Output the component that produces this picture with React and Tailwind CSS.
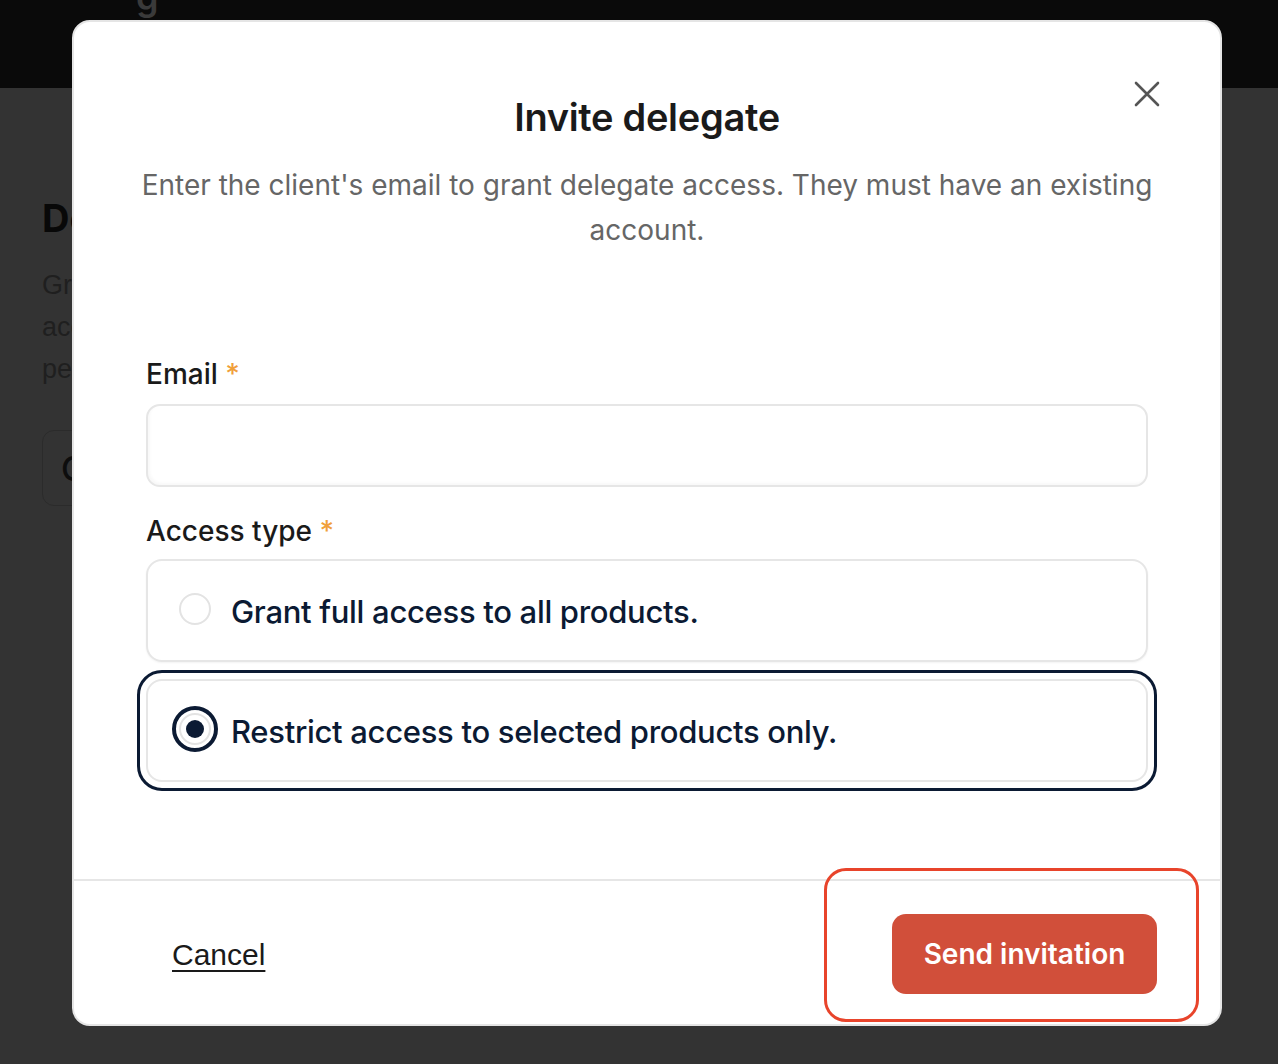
import React from "react";

export default function App() {
  return (
    <div className="relative w-[1278px] h-[1064px] overflow-hidden bg-[#333333]" style={{ fontFamily: "Inter, 'Noto Sans', sans-serif" }}>
      {/* background page (dimmed) */}
      <div className="h-[88px] bg-[#0a0a0a] relative overflow-hidden">
        <span className="absolute left-[136px] top-[-30px] text-[36px] text-[#3a3a3a] font-semibold">g</span>
      </div>
      <div className="pl-[42px] pt-[108px]">
        <div className="text-[38px] font-bold text-[#080808] leading-[44px]">Delegates</div>
        <div className="mt-[24px] text-[27px] leading-[42px] text-[#1f1f1f]" style={{ fontFamily: "'Liberation Sans', Arial, sans-serif" }}>
          <div>Grant</div>
          <div>access</div>
          <div>people</div>
        </div>
        <div className="mt-[40px] w-[300px] h-[76px] rounded-[12px] border border-[#2b2b2b] flex items-center pl-[18px] text-[34px] text-[#0d0d0d] font-medium">
          Cancel
        </div>
      </div>

      {/* modal */}
      <div className="absolute left-[72px] top-[20px] w-[1150px] h-[1006px] bg-white rounded-[18px] border-2 border-[#e5e5e5] flex flex-col">
        <button className="absolute right-[59px] top-[58px] w-[28px] h-[28px] flex items-center justify-center text-[#555]">
          <svg width="28" height="28" viewBox="0 0 28 28" fill="none" stroke="currentColor" strokeWidth="2.6" strokeLinecap="round">
            <path d="M3 3 L25 25 M25 3 L3 25" />
          </svg>
        </button>
        <div className="px-[60px] pt-[73px]">
          <h2 className="text-center text-[38px] leading-[44px] font-semibold text-[#1a1a1a] tracking-[-0.3px]">Invite delegate</h2>
          <p className="mt-[24px] text-center text-[28px] leading-[45px] text-[#666666]">
            Enter the client's email to grant delegate access. They must have an existing account.
          </p>
        </div>
        <div className="px-[72px] pt-[101px] flex-1">
          <label className="block text-[28px] leading-[40px] font-medium text-[#1a1a1a]">
            Email <span className="text-[#f0a03a]">*</span>
          </label>
          <div className="mt-[10px] h-[83px] rounded-[14px] border-2 border-[#e6e6e6] shadow-[inset_2px_-2px_3px_rgba(0,0,0,0.03)]"></div>
          <label className="block mt-[24px] text-[28px] leading-[40px] font-medium text-[#1a1a1a]">
            Access type <span className="text-[#f0a03a]">*</span>
          </label>
          <div className="mt-[8px] flex flex-col gap-[17px]">
            <div className="h-[103px] rounded-[16px] border-2 border-[#e6e6e6] shadow-[0_1px_2px_rgba(0,0,0,0.05)] flex items-center pl-[31px]">
              <span className="mb-[3px] w-[32px] h-[32px] rounded-full border-2 border-[#e3e3e3] shrink-0"></span>
              <span className="mt-[4px] ml-[20px] text-[31px] font-medium text-[#0b1a33] tracking-[-0.3px]">Grant full access to all products.</span>
            </div>
            <div className="h-[103px] rounded-[16px] border-2 border-[#e6e6e6] outline-[3px] outline-solid outline-[#0b1a33] outline-offset-[6px] flex items-center pl-[31px]">
              <span className="mb-[3px] relative w-[32px] h-[32px] rounded-full border-2 border-[#e3e3e3] shrink-0 flex items-center justify-center outline-[4px] outline-solid outline-[#0b1a33] outline-offset-[3px]">
                <span className="w-[18px] h-[18px] rounded-full bg-[#0b1a33]"></span>
              </span>
              <span className="mt-[4px] ml-[20px] text-[31px] font-medium text-[#0b1a33] tracking-[-0.3px]">Restrict access to selected products only.</span>
            </div>
          </div>
        </div>
        <div className="relative h-[145px] border-t-2 border-[#e6e6e6] flex items-center justify-between pl-[98px] pr-[63px]">
          <button className="mt-[4px] text-[30px] text-[#1a1a1a] underline decoration-2 underline-offset-[5px]" style={{ fontFamily: "'Liberation Sans', Arial, sans-serif" }}>Cancel</button>
          <button className="mt-[2px] w-[265px] h-[80px] rounded-[14px] bg-[#d14f3a] text-white text-[28px] font-semibold">Send invitation</button>
          <div className="absolute right-[21px] top-[-13px] w-[375px] h-[154px] rounded-[22px] border-[3.5px] border-[#e8442b] pointer-events-none"></div>
        </div>
      </div>
    </div>
  );
}
